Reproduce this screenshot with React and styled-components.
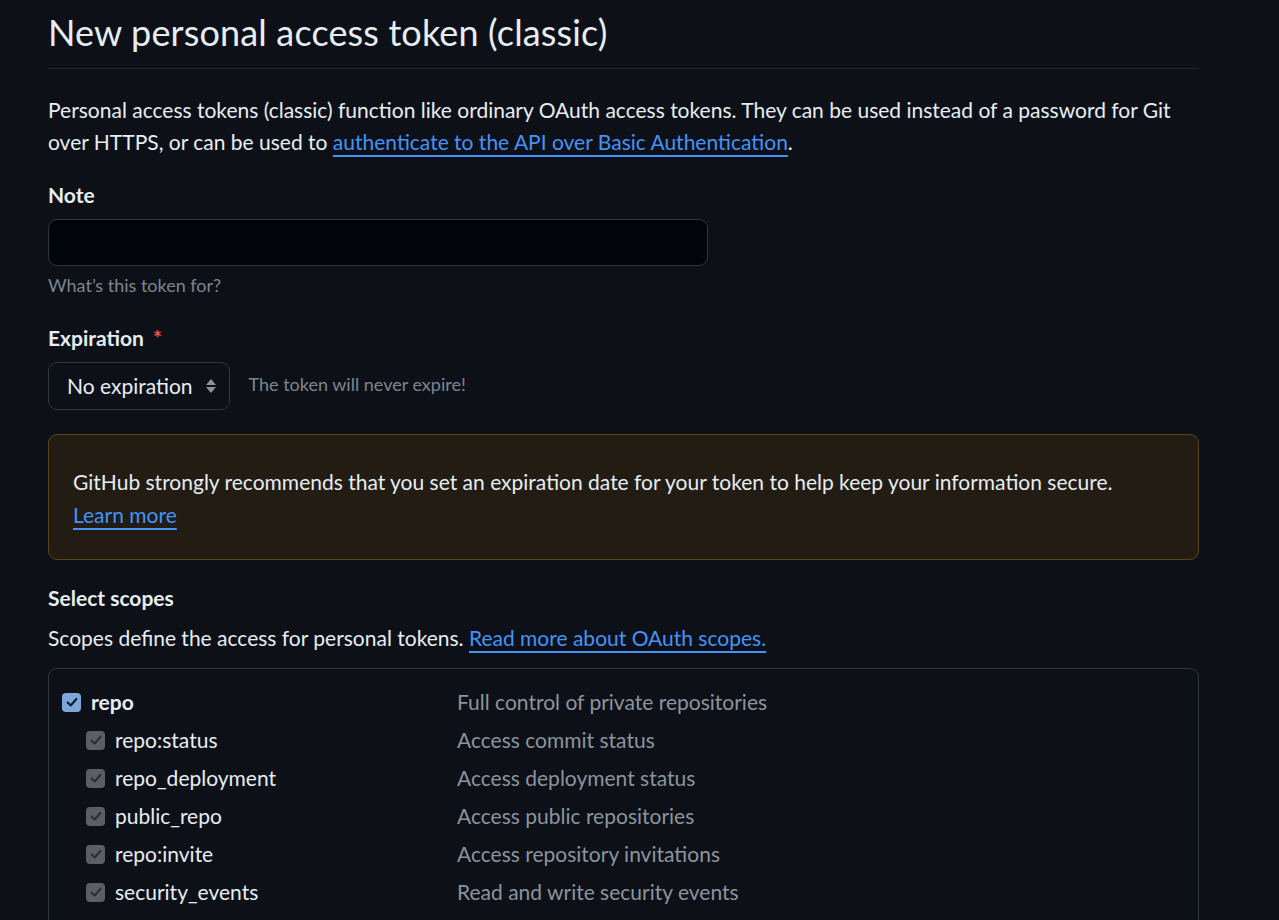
import React from "react";
import styled, { createGlobalStyle } from "styled-components";

const GlobalStyle = createGlobalStyle`
  html, body {
    margin: 0;
    padding: 0;
    background: #0d1117;
    color: #e6edf3;
    font-family: Lato, "Noto Sans", sans-serif;
  }
`;

const scopes = [
  { name: "repo", desc: "Full control of private repositories", top: true },
  { name: "repo:status", desc: "Access commit status" },
  { name: "repo_deployment", desc: "Access deployment status" },
  { name: "public_repo", desc: "Access public repositories" },
  { name: "repo:invite", desc: "Access repository invitations" },
  { name: "security_events", desc: "Read and write security events" },
];

const App = () => {
  return (
    <>
      <GlobalStyle />
      <Page>
        <Heading>New personal access token (classic)</Heading>
        <Intro>
          Personal access tokens (classic) function like ordinary OAuth access tokens. They can be used instead of a password for Git
          over HTTPS, or can be used to <Link href="#">authenticate to the API over Basic Authentication</Link>.
        </Intro>

        <Field>
          <Label>Note</Label>
          <TextInput type="text" />
          <Hint>What’s this token for?</Hint>
        </Field>

        <Field $gap={23}>
          <Label>
            Expiration <Required>*</Required>
          </Label>
          <SelectRow>
            <Select>
              No expiration
              <svg width="12" height="18" viewBox="0 0 12 18">
                <path d="M6 2 L11 8 H1 Z" fill="#8b949e" />
                <path d="M6 16 L11 10 H1 Z" fill="#8b949e" />
              </svg>
            </Select>
            <SideNote>The token will never expire!</SideNote>
          </SelectRow>
        </Field>

        <Flash>
          GitHub strongly recommends that you set an expiration date for your token to help keep your information secure.
          <br />
          <Link href="#">Learn more</Link>
        </Flash>

        <SectionLabel>Select scopes</SectionLabel>
        <ScopeIntro>
          Scopes define the access for personal tokens. <Link href="#">Read more about OAuth scopes.</Link>
        </ScopeIntro>

        <ScopeBox>
          {scopes.map((s) => (
            <ScopeRow key={s.name}>
              <ScopeName $top={s.top}>
                <Check $top={s.top}>
                  <svg width="14" height="14" viewBox="0 0 16 16">
                    <path
                      d="M3 8.5 L6.5 12 L13 4.5"
                      fill="none"
                      stroke={s.top ? "#161b22" : "#2b2e33"}
                      strokeWidth="2.4"
                      strokeLinecap="round"
                      strokeLinejoin="round"
                    />
                  </svg>
                </Check>
                {s.name}
              </ScopeName>
              <ScopeDesc>{s.desc}</ScopeDesc>
            </ScopeRow>
          ))}
        </ScopeBox>
      </Page>
    </>
  );
};

export default App;

const Page = styled.div`
  width: 1151px;
  margin-left: 48px;
  font-size: 21px;
  line-height: 32px;
`;

const Heading = styled.h2`
  margin: 0;
  padding: 11px 0 15px;
  font-size: 36px;
  line-height: 42px;
  font-weight: 400;
  letter-spacing: 0.15px;
  color: #e6edf3;
  border-bottom: 1px solid #21262d;
`;

const Intro = styled.p`
  margin: 25px 0 0;
  color: #e6edf3;
`;

const Link = styled.a`
  color: #4493f8;
  text-decoration: underline;
  text-underline-offset: 5px;
  text-decoration-thickness: 1.5px;
`;

const Field = styled.div`
  margin-top: ${(p) => p.$gap || 21}px;
  display: flex;
  flex-direction: column;
  align-items: flex-start;
`;

const Label = styled.div`
  font-weight: 700;
  font-size: 21px;
  line-height: 32px;
`;

const SectionLabel = styled(Label)`
  margin-top: 22px;
`;

const Required = styled.span`
  color: #f85149;
  margin-left: 4px;
`;

const TextInput = styled.input`
  box-sizing: border-box;
  margin-top: 8px;
  width: 660px;
  height: 47px;
  background: #010409;
  border: 1.5px solid #30363d;
  border-radius: 9px;
  color: #e6edf3;
  font: inherit;
  outline: none;
`;

const Hint = styled.div`
  margin-top: 6px;
  font-size: 18px;
  line-height: 27px;
  color: #7d8590;
`;

const SelectRow = styled.div`
  display: flex;
  align-items: center;
  gap: 19px;
  margin-top: 8px;
`;

const Select = styled.div`
  box-sizing: border-box;
  display: flex;
  align-items: center;
  gap: 12px;
  height: 48px;
  padding: 0 12px 0 18px;
  background: #0d1117;
  border: 1.5px solid #30363d;
  border-radius: 9px;
  font-size: 21px;
  color: #e6edf3;
`;

const SideNote = styled.span`
  font-size: 18px;
  color: #7d8590;
  margin-top: -4px;
`;

const Flash = styled.div`
  box-sizing: border-box;
  margin-top: 24px;
  padding: 30px 24px 28px;
  background: #221c13;
  border: 1.5px solid #5a4215;
  border-radius: 9px;
  line-height: 33px;
  color: #e6edf3;
`;

const ScopeIntro = styled.p`
  margin: 8px 0 0;
`;

const ScopeBox = styled.div`
  margin-top: 14px;
  padding: 14px 0 0 13px;
  border: 1.5px solid #30363d;
  border-bottom: none;
  border-radius: 9px 9px 0 0;
  min-height: 240px;
`;

const ScopeRow = styled.div`
  display: flex;
  align-items: center;
  height: 38px;
`;

const ScopeName = styled.div`
  display: flex;
  align-items: center;
  gap: 10px;
  width: 395px;
  padding-left: ${(p) => (p.$top ? "0" : "24px")};
  box-sizing: border-box;
  font-weight: ${(p) => (p.$top ? 700 : 400)};
  color: #e6edf3;
`;

const Check = styled.span`
  display: inline-flex;
  align-items: center;
  justify-content: center;
  width: 19px;
  height: 19px;
  border-radius: 4px;
  background: ${(p) => (p.$top ? "#7ca6dc" : "#5b5e62")};
`;

const ScopeDesc = styled.div`
  color: #8b949e;
`;
